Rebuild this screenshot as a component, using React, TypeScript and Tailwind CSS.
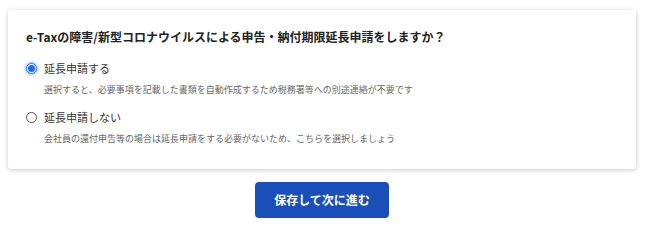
import { useState } from 'react'

const options = [
  {
    value: 'yes',
    label: '延長申請する',
    note: '選択すると、必要事項を記載した書類を自動作成するため税務署等への別途連絡が不要です',
  },
  {
    value: 'no',
    label: '延長申請しない',
    note: '会社員の還付申告等の場合は延長申請をする必要がないため、こちらを選択しましょう',
  },
]

export default function App() {
  const [choice, setChoice] = useState('yes')

  return (
    <div
      className="w-[650px] h-[226px] bg-white pt-[10px] pl-[8px]"
      style={{ fontFamily: '"Noto Sans CJK JP", "Noto Sans", sans-serif' }}
    >
      <div className="w-[628px] flex flex-col items-center">
        <div className="w-full h-[159px] bg-white rounded-[3px] shadow-[0_1px_5px_rgba(0,0,0,0.22)] pl-[18px] pt-[18px]">
          <h2 className="text-[12px] leading-[17px] font-bold text-[#222]">
            e-Taxの障害/新型コロナウイルスによる申告・納付期限延長申請をしますか？
          </h2>
          <div className="mt-[15px] flex flex-col gap-[13px]">
            {options.map((o) => {
              const on = choice === o.value
              return (
                <label key={o.value} className="flex flex-col cursor-pointer">
                  <span className="flex items-center gap-[7px] h-[16px]">
                    <span
                      className={
                        on
                          ? 'w-[11px] h-[11px] rounded-full border border-[#1a6cf0] bg-white flex items-center justify-center shadow-[0_0_3px_1px_rgba(40,110,240,0.45)]'
                          : 'w-[11px] h-[11px] rounded-full border border-[#555] bg-white'
                      }
                    >
                      {on && <span className="w-[7px] h-[7px] rounded-full bg-[#1a6cf0]" />}
                    </span>
                    <input
                      type="radio"
                      name="ext"
                      className="hidden"
                      checked={on}
                      onChange={() => setChoice(o.value)}
                    />
                    <span className="text-[11px] text-[#333]">{o.label}</span>
                  </span>
                  <span className="mt-[7px] pl-[18px] text-[9px] leading-[13px] text-[#666]">{o.note}</span>
                </label>
              )
            })}
          </div>
        </div>
        <button className="mt-[13px] w-[134px] h-[36px] rounded-[4px] bg-[#1a4fba] text-white text-[12px] font-bold">
          保存して次に進む
        </button>
      </div>
    </div>
  )
}
